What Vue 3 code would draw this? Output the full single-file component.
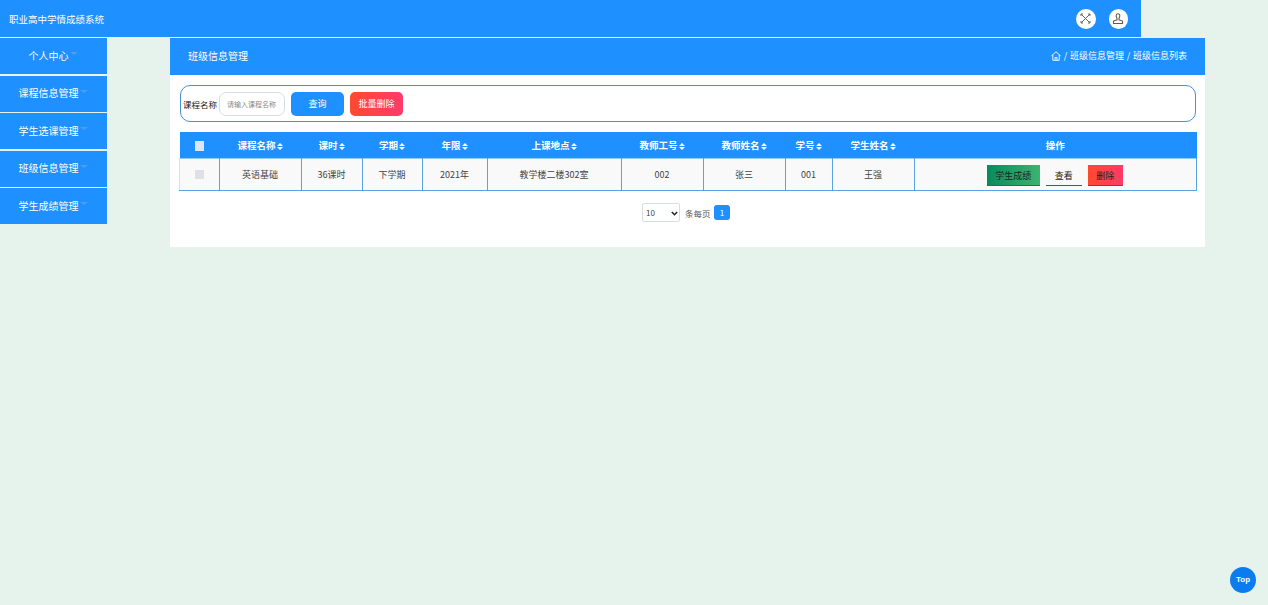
<template>
  <div class="page">
    <header class="topbar">
      <span class="sys-title">职业高中学情成绩系统</span>
      <div class="top-icons">
        <span class="round-icon">
          <svg width="11" height="11" viewBox="0 0 11 11" fill="none" stroke="#5a5048" stroke-width="0.9">
            <path d="M1.500 1.500l8 8M9.500 1.500l-8 8" />
            <path d="M1 3V1h2M8 1h2v2M1 8v2h2M8 10h2V8" />
          </svg>
        </span>
        <span class="round-icon">
          <svg width="12" height="12" viewBox="0 0 12 12" fill="none" stroke="#6b5a4a" stroke-width="1.100">
            <path d="M4.200 2.600a1.800 1.800 0 1 1 3.600 0c0 1.300-.6 2.200-.8 2.900v1.300l3.500 1.300v2.400H1.500V8.100L5 6.800V5.500c-.2-.7-.8-1.600-.8-2.900z" />
          </svg>
        </span>
      </div>
    </header>

    <div class="body-row">
      <nav class="sidebar">
        <a v-for="m in menus" :key="m" class="menu-item">
          <span class="menu-text">{{ m }}</span><i class="caret"></i>
        </a>
      </nav>

      <main class="content">
        <div class="title-bar">
          <span>班级信息管理</span>
          <span class="crumbs">
            <svg width="10" height="10" viewBox="0 0 10 10" fill="none" stroke="#fff" stroke-width="0.9">
              <path d="M.5 4.800L5 .8l4.500 4M1.800 4v5.300h6.400V4M4 9.300V6.500h2v2.800" />
            </svg>
            <span>/ 班级信息管理 / 班级信息列表</span>
          </span>
        </div>

        <div class="panel">
          <form class="search-box" @submit.prevent>
            <label class="search-label">课程名称</label>
            <input class="search-input" placeholder="请输入课程名称" />
            <button class="btn btn-blue">查询</button>
            <button class="btn btn-red">批量删除</button>
          </form>

          <table class="grid">
            <colgroup>
              <col v-for="w in colWidths" :key="w.k" :style="{ width: w.v + 'px' }" />
            </colgroup>
            <thead>
              <tr>
                <th><span class="check head-check"></span></th>
                <th v-for="c in columns" :key="c">
                  {{ c }}<svg class="sort" width="6" height="7" viewBox="0 0 6 7" fill="#fff"><path d="M3 0l3 3H0zM0 4h6L3 7z" /></svg>
                </th>
                <th>操作</th>
              </tr>
            </thead>
            <tbody>
              <tr>
                <td><span class="check row-check"></span></td>
                <td v-for="v in rowData" :key="v">{{ v }}</td>
                <td>
                  <div class="ops">
                    <span class="op op-green">学生成绩</span>
                    <span class="op op-plain">查看</span>
                    <span class="op op-red">删除</span>
                  </div>
                </td>
              </tr>
            </tbody>
          </table>

          <div class="pager">
            <select class="page-size">
              <option>10</option>
            </select>
            <span class="per-page">条每页</span>
            <span class="page-num">1</span>
          </div>
        </div>
      </main>
    </div>

    <a class="to-top">Top</a>
  </div>
</template>

<script setup>
const menus = ['个人中心', '课程信息管理', '学生选课管理', '班级信息管理', '学生成绩管理']
const columns = ['课程名称', '课时', '学期', '年限', '上课地点', '教师工号', '教师姓名', '学号', '学生姓名']
const rowData = ['英语基础', '36课时', '下学期', '2021年', '教学楼二楼302室', '002', '张三', '001', '王强']
const colWidths = [39.5, 82, 61, 60, 65, 134, 82, 82, 47, 82, 282.5].map((v, k) => ({ k, v }))
</script>

<style>
html,
body {
  margin: 0;
  background: #e6f3ec;
}
</style>

<style scoped>
.page {
  min-height: 605px;
  background: #e6f3ec;
  font-family: "Noto Sans CJK SC", "Noto Sans", sans-serif;
  font-size: 10px;
  color: #333;
  position: relative;
  overflow: hidden;
}
.topbar {
  width: 1141px;
  height: 37px;
  background: #1e90ff;
  display: flex;
  align-items: center;
  justify-content: space-between;
  padding: 0 13px 0 9px;
  box-sizing: border-box;
}
.sys-title {
  color: #fff;
  font-size: 9.500px;
}
.top-icons {
  display: flex;
  gap: 13px;
}
.round-icon {
  width: 19.500px;
  height: 20px;
  border-radius: 50%;
  background: #fff;
  display: flex;
  align-items: center;
  justify-content: center;
}
.body-row {
  display: flex;
  align-items: flex-start;
  padding-top: 1px;
}
.sidebar {
  width: 107px;
  display: flex;
  flex-direction: column;
  gap: 1.500px;
}
.menu-item {
  height: 36px;
  background: #1e90ff;
  color: #fff;
  display: flex;
  align-items: center;
  justify-content: center;
  padding-right: 1px;
  padding-bottom: 2px;
  box-sizing: border-box;
  font-size: 10px;
}
.caret {
  width: 0;
  height: 0;
  margin: -3px 0 0 1px;
  border-left: 4px solid transparent;
  border-right: 4px solid transparent;
  border-top: 3px solid #4f9fe8;
}
.content {
  width: 1035px;
  margin-left: 63px;
  background: #fff;
  height: 209px;
}
.title-bar {
  height: 37px;
  background: #1e90ff;
  color: #fff;
  display: flex;
  align-items: center;
  justify-content: space-between;
  padding: 0 18px 2px;
  box-sizing: border-box;
}
.crumbs {
  display: flex;
  align-items: center;
  gap: 3px;
  font-size: 9px;
  word-spacing: 0.700px;
}
.panel {
  padding: 10px 8px 0 10px;
}
.search-box {
  height: 37px;
  width: 1016px;
  box-sizing: border-box;
  border: 1px solid #4a90d9;
  border-radius: 10px;
  display: flex;
  align-items: center;
  padding: 0 2px;
  background: #fff;
}
.search-label {
  color: #222;
  font-size: 8.500px;
  width: 34px;
  white-space: nowrap;
  margin-right: 2px;
}
.search-input {
  width: 66px;
  height: 24px;
  box-sizing: border-box;
  border: 1px solid #d8dde3;
  border-radius: 7px;
  padding: 0 7px;
  font-family: inherit;
  font-size: 7px;
  outline: none;
  margin-right: 6px;
}
.search-input::placeholder {
  color: #8a8a8a;
}
.btn {
  width: 53px;
  height: 24px;
  border: 0;
  border-radius: 5px;
  color: #fff;
  font-family: inherit;
  font-size: 9px;
  padding: 0;
  margin-right: 6px;
}
.btn-blue {
  background: #1e90ff;
}
.btn-red {
  background: linear-gradient(90deg, #ff4a2e, #ff3a6a);
}
.grid {
  margin: 10px 0 0 -1px;
  width: 1017px;
  table-layout: fixed;
  border-collapse: collapse;
  font-size: 9px;
}
.grid th {
  height: 26px;
  padding: 0;
  background: #1e90ff;
  color: #fff;
  font-size: 9.500px;
  font-weight: 700;
}
.sort {
  margin-left: 1px;
  vertical-align: -0.500px;
}
.grid td {
  height: 31px;
  padding: 0;
  text-align: center;
  background: #f9f9f9;
  color: #444;
  border: 1px solid #5aa2e0;
  border-top-color: #9cc8ef;
}
.grid td:first-child {
  border-left-color: #cfe3f5;
}
.check {
  display: inline-block;
  width: 9px;
  height: 10px;
  background: #dde1e6;
  vertical-align: middle;
}
.head-check {
  background: #dfe5ec;
}
.row-check {
  height: 9px;
  margin-bottom: 2px;
}
.ops {
  display: flex;
  justify-content: center;
  gap: 6px;
  padding: 2px 1px 0 0;
}
.op {
  height: 21px;
  box-sizing: border-box;
  display: flex;
  align-items: center;
  justify-content: center;
  color: #222;
  border-bottom: 1px solid #555;
}
.op-green {
  width: 53px;
  background: linear-gradient(90deg, #0a8a5c, #3cb371);
}
.op-plain {
  width: 36px;
}
.op-red {
  width: 35px;
  background: linear-gradient(90deg, #ff4a2e, #ff3a6a);
}
.pager {
  display: flex;
  align-items: center;
  justify-content: center;
  margin-top: 12px;
  padding-right: 5px;
  font-size: 8.500px;
  color: #555;
}
.page-size {
  appearance: none;
  width: 38px;
  height: 19px;
  box-sizing: border-box;
  border: 1px solid #d8dde3;
  border-radius: 2px;
  background: #fff url("data:image/svg+xml,%3Csvg xmlns='http://www.w3.org/2000/svg' width='7' height='5'%3E%3Cpath d='M.8 1l2.700 2.700L6.200 1' fill='none' stroke='%23222' stroke-width='1.500'/%3E%3C/svg%3E") no-repeat 28px 7px;
  font-family: inherit;
  font-size: 8px;
  color: #444;
  padding: 0 0 0 3px;
  margin-right: 5px;
}
.per-page {
  width: 26px;
  margin-right: 3px;
  white-space: nowrap;
}
.page-num {
  width: 16px;
  height: 15px;
  background: #1e90ff;
  color: #fff;
  border-radius: 3px;
  text-align: center;
  line-height: 15px;
  font-size: 8px;
}
.to-top {
  position: absolute;
  left: 1230px;
  top: 567px;
  width: 26px;
  height: 26px;
  border-radius: 50%;
  background: #0a7cf0;
  color: #fff;
  font-family: "Liberation Sans", sans-serif;
  font-size: 8px;
  font-weight: 700;
  text-align: center;
  line-height: 26px;
}
</style>
